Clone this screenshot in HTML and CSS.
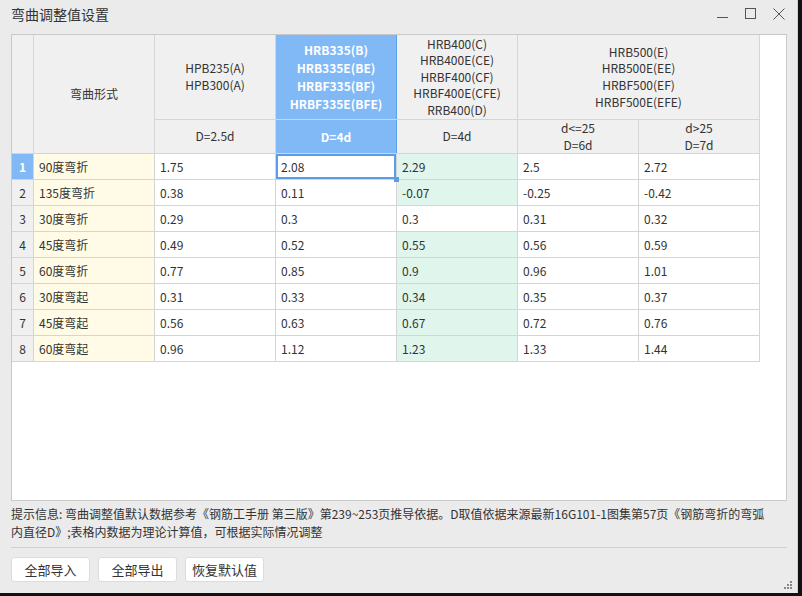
FILE: index.html
```html
<!DOCTYPE html>
<html lang="zh">
<head>
<meta charset="utf-8">
<title>弯曲调整值设置</title>
<link rel="stylesheet" href="styles.css">
</head>
<body>
<div class="dialog">
  <div class="titlebar">
    <span class="title">弯曲调整值设置</span>
    <div class="controls">
      <svg class="ctl" width="14" height="14" viewBox="0 0 14 14"><path d="M1 10.5h11" stroke="#555" stroke-width="1"/></svg>
      <svg class="ctl" width="14" height="14" viewBox="0 0 14 14"><rect x="1.5" y="1.5" width="10" height="10" fill="none" stroke="#555" stroke-width="1"/></svg>
      <svg class="ctl" width="14" height="14" viewBox="0 0 14 14"><path d="M1.5 1.5l11 11M12.5 1.5l-11 11" stroke="#555" stroke-width="1"/></svg>
    </div>
  </div>
  <div class="grid-wrap">
    <table class="grid">
      <colgroup>
        <col class="c-num"><col class="c-w"><col class="c-w"><col class="c-w"><col class="c-w"><col class="c-w"><col class="c-w">
      </colgroup>
      <thead>
        <tr class="h1">
          <th rowspan="2" class="hnum"></th>
          <th rowspan="2">弯曲形式</th>
          <th>HPB235(A)<br>HPB300(A)</th>
          <th class="sel-col">HRB335(B)<br>HRB335E(BE)<br>HRBF335(BF)<br>HRBF335E(BFE)</th>
          <th>HRB400(C)<br>HRB400E(CE)<br>HRBF400(CF)<br>HRBF400E(CFE)<br>RRB400(D)</th>
          <th colspan="2">HRB500(E)<br>HRB500E(EE)<br>HRBF500(EF)<br>HRBF500E(EFE)</th>
        </tr>
        <tr class="h2">
          <th>D=2.5d</th>
          <th class="sel-col">D=4d</th>
          <th>D=4d</th>
          <th>d&lt;=25<br>D=6d</th>
          <th>d&gt;25<br>D=7d</th>
        </tr>
      </thead>
      <tbody>
        <tr><td class="num sel-row">1</td><td class="name">90度弯折</td><td>1.75</td><td class="cur">2.08</td><td class="g">2.29</td><td>2.5</td><td>2.72</td></tr>
        <tr><td class="num">2</td><td class="name">135度弯折</td><td>0.38</td><td>0.11</td><td class="g">-0.07</td><td>-0.25</td><td>-0.42</td></tr>
        <tr><td class="num">3</td><td class="name">30度弯折</td><td>0.29</td><td>0.3</td><td>0.3</td><td>0.31</td><td>0.32</td></tr>
        <tr><td class="num">4</td><td class="name">45度弯折</td><td>0.49</td><td>0.52</td><td class="g">0.55</td><td>0.56</td><td>0.59</td></tr>
        <tr><td class="num">5</td><td class="name">60度弯折</td><td>0.77</td><td>0.85</td><td class="g">0.9</td><td>0.96</td><td>1.01</td></tr>
        <tr><td class="num">6</td><td class="name">30度弯起</td><td>0.31</td><td>0.33</td><td class="g">0.34</td><td>0.35</td><td>0.37</td></tr>
        <tr><td class="num">7</td><td class="name">45度弯起</td><td>0.56</td><td>0.63</td><td class="g">0.67</td><td>0.72</td><td>0.76</td></tr>
        <tr><td class="num">8</td><td class="name">60度弯起</td><td>0.96</td><td>1.12</td><td class="g">1.23</td><td>1.33</td><td>1.44</td></tr>
      </tbody>
    </table>
  </div>
  <p class="hint"><span class="line">提示信息: 弯曲调整值默认数据参考《钢筋工手册 第三版》第239~253页推导依据。D取值依据来源最新16G101-1图集第57页《钢筋弯折的弯弧</span><br><span class="line">内直径D》;表格内数据为理论计算值，可根据实际情况调整</span></p>
  <div class="footer">
    <button class="btn">全部导入</button>
    <button class="btn">全部导出</button>
    <button class="btn">恢复默认值</button>
  </div>
  <svg class="grip" width="10" height="10" viewBox="0 0 10 10">
    <rect x="7" y="1" width="2" height="2" fill="#888"/>
    <rect x="4" y="4" width="2" height="2" fill="#888"/>
    <rect x="7" y="4" width="2" height="2" fill="#888"/>
    <rect x="1" y="7" width="2" height="2" fill="#888"/>
    <rect x="4" y="7" width="2" height="2" fill="#888"/>
    <rect x="7" y="7" width="2" height="2" fill="#888"/>
  </svg>
</div>
</body>
</html>
```
FILE: styles.css
```css
html, body {
  margin: 0;
  padding: 0;
  background: #111;
}
body {
  width: 802px;
  height: 596px;
  overflow: hidden;
  font-family: "Noto Sans CJK SC", "Noto Sans", sans-serif;
  color: #333;
}
.dialog {
  position: relative;
  width: 798px;
  height: 593px;
  background: #ebebeb;
  box-sizing: border-box;
  border-right: 1px solid #d0d0d0;
  display: flex;
  flex-direction: column;
}
.titlebar {
  height: 34px;
  flex: none;
  display: flex;
  align-items: center;
  justify-content: space-between;
  padding-left: 11px;
  padding-right: 11px;
}
.title {
  font-size: 14px;
  color: #333;
  margin-top: -6px;
}
.controls {
  display: flex;
  gap: 14px;
  margin-top: -6px;
}
.ctl {
  display: block;
}
.grid-wrap {
  flex: none;
  margin: 0 10px 0 11px;
  height: 467px;
  box-sizing: border-box;
  border: 1px solid #c9c9c9;
  background: #fff;
  overflow: hidden;
}
.grid {
  border-collapse: collapse;
  table-layout: fixed;
  margin: -1px 0 0 -1px;
  font-size: 12px;
}
.c-num { width: 22px; }
.c-w { width: 121px; }
.grid th, .grid td {
  border: 1px solid #d5d5d5;
  padding: 0;
}
.grid th {
  background: #f0f0f0;
  font-weight: normal;
  line-height: 16.6px;
  text-align: center;
  color: #333;
}
.h1 { height: 85px; }
.h2 { height: 34px; }
.grid th.sel-col {
  background: #80b9f6;
  color: #fff;
  font-weight: bold;
  border-left: 1px solid #5c9fe8;
  border-right: 1px solid #5c9fe8;
  line-height: 18px;
}
.grid td {
  height: 25px;
  padding-left: 5px;
  color: #333;
}
.grid td.num {
  background: #f0f0f0;
  padding: 0;
  text-align: center;
}
.grid td.num.sel-row {
  background: #80b9f6;
  color: #fff;
  font-weight: bold;
}
.grid td.name {
  background: #fffbe6;
}
.grid td.g {
  background: #e0f6ec;
}
.grid td.cur {
  position: relative;
  box-shadow: inset 0 0 0 2px #5a9de8;
}
.grid td.cur::after {
  content: "";
  position: absolute;
  right: -3px;
  bottom: -3px;
  width: 5px;
  height: 5px;
  background: #5a9de8;
}
.hint {
  margin: 4px 10px 0 11px;
  font-size: 12px;
  line-height: 18px;
  color: #333;
  height: 42px;
  white-space: nowrap;
  overflow: hidden;
}
.hint .line {
  letter-spacing: 0;
}
.footer {
  margin: 0 10px 0 11px;
  border-top: 1px solid #cfcfcf;
  padding-top: 9px;
  display: flex;
  gap: 8px;
}
.btn {
  width: 79px;
  height: 25px;
  background: #fff;
  border: 1px solid #dcdcdc;
  border-radius: 3px;
  font-family: "Noto Sans CJK SC", sans-serif;
  font-size: 13px;
  color: #333;
  padding: 0;
}
.grip {
  position: absolute;
  right: 4px;
  bottom: 3px;
}
```
